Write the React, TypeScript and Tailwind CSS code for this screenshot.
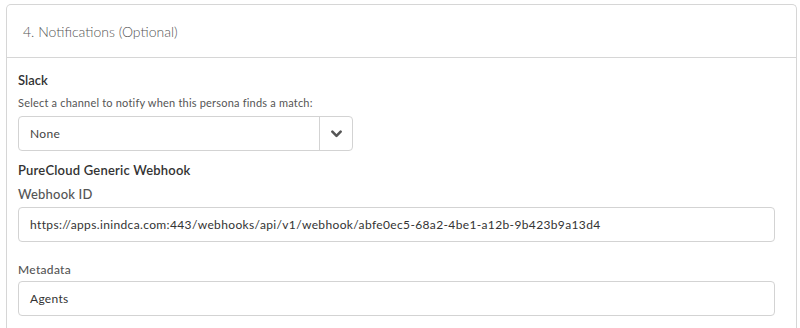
export default function App() {
  return (
    <main className="h-[328px] w-[800px] overflow-hidden bg-white font-['Lato',sans-serif] text-[#333]">
      <div className="ml-[6px] mr-[3px] mt-[4px] h-[340px] rounded-t-[5px] border border-b-0 border-[#d6d6d6]">
        <header className="flex h-[53px] items-center border-b border-[#d6d6d6] pl-[16px]">
          <h2 className="text-[14px] font-light text-[#555]">4. Notifications (Optional)</h2>
        </header>

        <div className="pl-[11px] pr-[20px]">
          <h3 className="mt-[14px] text-[13px] font-semibold leading-[16px]">Slack</h3>
          <p className="mt-[8px] text-[11px] leading-[14px] tracking-[0.2px] text-[#555]">
            Select a channel to notify when this persona finds a match:
          </p>
          <div className="mt-[6px] flex h-[35px] w-[335px] items-center rounded-[4px] border border-[#d3d3d3]">
            <span className="flex-1 pl-[11px] text-[12px] tracking-[0.3px] text-[#444]">None</span>
            <span className="flex h-full w-[33px] items-center justify-center border-l border-[#d3d3d3]">
              <svg viewBox="0 0 12 8" className="h-[8px] w-[11px]" fill="none" stroke="#555" strokeWidth="2.8" strokeLinecap="round" strokeLinejoin="round">
                <path d="M1.5 1.5 6 6l4.5-4.5" />
              </svg>
            </span>
          </div>

          <h3 className="mt-[11px] text-[13px] font-semibold leading-[16px] tracking-[0.2px]">PureCloud Generic Webhook</h3>
          <label className="mt-[8px] block text-[13px] font-medium leading-[16px] tracking-[0.2px] text-[#555]">Webhook ID</label>
          <div className="mt-[5px] flex h-[35px] w-[757px] items-center rounded-[4px] border border-[#d3d3d3] pl-[11px] text-[12px] tracking-[0.36px] text-[#333]">
            https://apps.inindca.com:443/webhooks/api/v1/webhook/abfe0ec5-68a2-4be1-a12b-9b423b9a13d4
          </div>

          <label className="mt-[20px] block text-[12px] font-medium leading-[16px] tracking-[0.3px] text-[#555]">Metadata</label>
          <div className="mt-[3px] flex h-[35px] w-[757px] items-center rounded-[4px] border border-[#d3d3d3] pl-[11px] text-[12px] tracking-[0.3px] text-[#333]">
            Agents
          </div>
        </div>
      </div>
    </main>
  )
}
